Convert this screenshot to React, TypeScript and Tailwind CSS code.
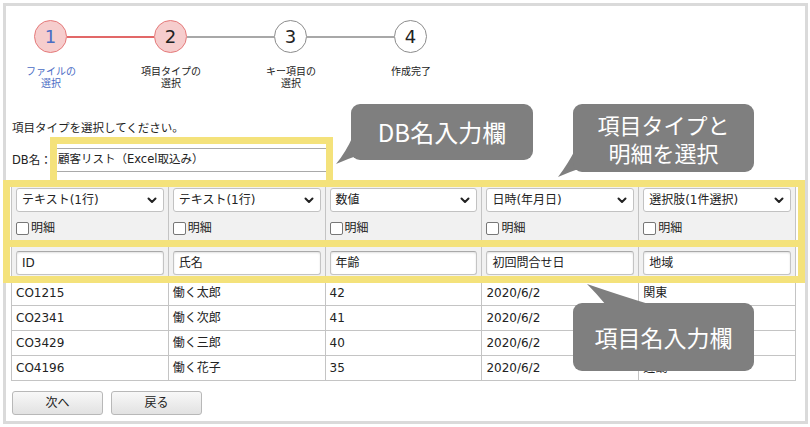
import React from "react";

const FONT = "font-['DejaVu_Sans','Noto_Sans_CJK_JP',sans-serif]";

function Chevron() {
  return (
    <svg width="10" height="7" viewBox="0 0 10 7" className="shrink-0">
      <path d="M1.5 1.5 L5 5 L8.5 1.5" fill="none" stroke="#222" strokeWidth="2" strokeLinecap="round" strokeLinejoin="round" />
    </svg>
  );
}

function Step({ n, active, blue }: { n: string; active: boolean; blue?: boolean }) {
  return (
    <div
      className={
        active
          ? "w-[33px] h-[33px] rounded-full border-[1.5px] border-[#e57a7a] bg-[#f6cdcd] flex items-center justify-center shrink-0"
          : "w-[33px] h-[33px] rounded-full border-[1.5px] border-[#8c8c8c] bg-white flex items-center justify-center shrink-0"
      }
    >
      <span className={blue ? "text-[18px] leading-none text-[#4a6cc4]" : "text-[18px] leading-none text-[#222]"}>{n}</span>
    </div>
  );
}

const types = ["テキスト(1行)", "テキスト(1行)", "数値", "日時(年月日)", "選択肢(1件選択)"];
const names = ["ID", "氏名", "年齢", "初回問合せ日", "地域"];
const rows = [
  ["CO1215", "働く太郎", "42", "2020/6/2", "関東"],
  ["CO2341", "働く次郎", "41", "2020/6/2", ""],
  ["CO3429", "働く三郎", "40", "2020/6/2", ""],
  ["CO4196", "働く花子", "35", "2020/6/2", "近畿"],
];

export default function App() {
  return (
    <div className={`relative w-[810px] h-[427px] bg-white p-[3px] text-[#222] ${FONT}`}>
      <div className="w-[805px] h-[421px] border-[3px] border-[#dadada] bg-white flex flex-col">
        {/* stepper circles */}
        <div className="flex items-center pl-[28px] pt-[14px]">
          <Step n="1" active blue />
          <div className="w-[87px] h-[2px] bg-[#e26868]" />
          <Step n="2" active />
          <div className="w-[87px] h-[2px] bg-[#a8a8a8]" />
          <Step n="3" active={false} />
          <div className="w-[87px] h-[2px] bg-[#a8a8a8]" />
          <Step n="4" active={false} />
        </div>
        {/* stepper labels */}
        <div className="flex gap-[32px] pl-[1px] mt-[13px] text-[10px] leading-[12px] text-center">
          <div className="w-[88px] text-[#4a6cc4]">ファイルの<br />選択</div>
          <div className="w-[88px]">項目タイプの<br />選択</div>
          <div className="w-[88px]">キー項目の<br />選択</div>
          <div className="w-[88px]">作成完了</div>
        </div>

        <div className="mt-[30px] pl-[6px] text-[11.5px] leading-[16px]">項目タイプを選択してください。</div>

        <div className="mt-[12px] pl-[6px] flex items-center h-[24px]">
          <span className="w-[44px] text-[11.5px] leading-[16px]">DB名：</span>
          <div className="w-[274px] h-[24px] border border-[#a9a9a9] bg-white flex items-center px-[1px] text-[11.5px]">
            顧客リスト（Excel取込み）
          </div>
        </div>

        {/* table */}
        <div className="mt-[12px] ml-[5px] w-[785px] border-t border-l border-[#c4c4c4] text-[12px]">
          <div className="grid grid-cols-5">
            {types.map((t, i) => (
              <div key={i} className="h-[59px] border-r border-b border-[#c4c4c4] bg-[#f1f1f1] px-[4px] pt-[3px]">
                <div className="h-[24px] rounded-[3px] border border-[#c2c2c2] bg-white flex items-center justify-between pl-[5px] pr-[6px]">
                  <span className="text-[12px] leading-none">{t}</span>
                  <Chevron />
                </div>
                <div className="mt-[8px] flex items-center h-[16px]">
                  <span className="w-[13px] h-[13px] border border-[#777] rounded-[2px] bg-white" />
                  <span className="ml-[2px] text-[12px] leading-none">明細</span>
                </div>
              </div>
            ))}
          </div>
          <div className="grid grid-cols-5">
            {names.map((n, i) => (
              <div key={i} className="h-[37px] border-r border-b border-[#c4c4c4] bg-[#f1f1f1] px-[4px] pt-[7px]">
                <div className="h-[24px] rounded-[3px] border border-[#c4c4c4] border-t-[#a9a9a9] bg-white shadow-[inset_0_1px_2px_rgba(0,0,0,0.12)] flex items-center px-[5px] text-[12px]">
                  {n}
                </div>
              </div>
            ))}
          </div>
          {rows.map((r, ri) => (
            <div key={ri} className="grid grid-cols-5">
              {r.map((c, ci) => (
                <div key={ci} className="h-[25px] border-r border-b border-[#c4c4c4] bg-white flex items-center px-[4px] text-[12px]">
                  {c}
                </div>
              ))}
            </div>
          ))}
        </div>

        <div className="mt-[10px] ml-[6px] flex gap-[8px]">
          <div className="w-[91px] h-[24px] rounded-[3px] border border-[#b8b8b8] bg-gradient-to-b from-[#f8f8f8] to-[#e2e2e2] flex items-center justify-center text-[12px]">次へ</div>
          <div className="w-[91px] h-[24px] rounded-[3px] border border-[#b8b8b8] bg-gradient-to-b from-[#f8f8f8] to-[#e2e2e2] flex items-center justify-center text-[12px]">戻る</div>
        </div>
      </div>

      {/* yellow highlight overlays */}
      <div className="absolute left-[50px] top-[137px] w-[283px] h-[50px] border-[7px] border-[#f4e27b]" />
      <div className="absolute left-[3px] top-[180px] w-[802px] h-[67px] border-[7px] border-[#f4e27b]" />
      <div className="absolute left-[3px] top-[240px] w-[802px] h-[43px] border-[7px] border-[#f4e27b]" />

      {/* callout tails */}
      <svg className="absolute left-0 top-0 pointer-events-none" width="810" height="427">
        <path d="M353 136 Q346 152 336 164 Q350 158 362 154 Z" fill="#7f7f7f" />
        <path d="M576 148 Q568 164 558 177 Q572 171 584 167 Z" fill="#7f7f7f" />
        <path d="M606 305 Q596 293 587 284 Q622 296 652 305 Z" fill="#7f7f7f" />
      </svg>

      {/* callouts */}
      <div className="absolute left-[351px] top-[104px] w-[182px] h-[56px] rounded-[9px] bg-[#7f7f7f] flex items-center justify-center text-white text-[24px] leading-none font-['Noto_Sans_CJK_JP',sans-serif]">
        DB名入力欄
      </div>
      <div className="absolute left-[573px] top-[104px] w-[181px] h-[68px] rounded-[9px] bg-[#7f7f7f] flex items-center justify-center text-center text-white text-[22px] leading-[28px] font-['Noto_Sans_CJK_JP',sans-serif]">
        <span>項目タイプと<br />明細を選択</span>
      </div>
      <div className="absolute left-[573px] top-[303px] w-[181px] h-[68px] rounded-[9px] bg-[#7f7f7f] flex items-center justify-center text-white text-[23px] leading-none font-['Noto_Sans_CJK_JP',sans-serif]">
        項目名入力欄
      </div>
    </div>
  );
}
